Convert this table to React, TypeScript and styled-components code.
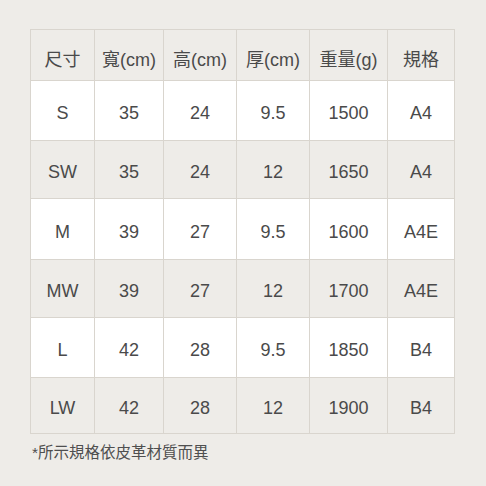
import React from "react";
import styled, { createGlobalStyle } from "styled-components";

const Global = createGlobalStyle`
  html, body { margin: 0; padding: 0; background: #eeece8; }
  body { font-family: "Liberation Sans", "Noto Sans CJK TC", sans-serif; }
`;

const Page = styled.div`
  width: 486px;
  height: 486px;
  box-sizing: border-box;
  padding: 29px 0 0 30px;
  background: #eeece8;
  display: flex;
  flex-direction: column;
`;

const Table = styled.div`
  display: grid;
  grid-template-columns: 63px 68px 72px 72px 77px 66px;
  grid-template-rows: 50px 59px 57px 60px 57px 59px 55px;
  gap: 1px;
  padding: 1px;
  width: max-content;
  background: #d9d5ce;
`;

const Cell = styled.div<{ $tone: "head" | "white" | "gray" }>`
  display: flex;
  align-items: center;
  justify-content: center;
  padding-top: 6px;
  box-sizing: border-box;
  background: ${(p) => (p.$tone === "white" ? "#ffffff" : "#eeece8")};
  color: #4a4a4a;
  font-size: 18px;
  white-space: nowrap;
`;

const Note = styled.div`
  margin-top: 6px;
  margin-left: 2px;
  font-size: 15.5px;
  color: #4f4f4f;
  font-family: "Liberation Sans", "Noto Sans CJK TC", sans-serif;
`;

const head = ["尺寸", "寬(cm)", "高(cm)", "厚(cm)", "重量(g)", "規格"];
const rows = [
  ["S", "35", "24", "9.5", "1500", "A4"],
  ["SW", "35", "24", "12", "1650", "A4"],
  ["M", "39", "27", "9.5", "1600", "A4E"],
  ["MW", "39", "27", "12", "1700", "A4E"],
  ["L", "42", "28", "9.5", "1850", "B4"],
  ["LW", "42", "28", "12", "1900", "B4"],
];

export default function App() {
  return (
    <>
      <Global />
      <Page>
        <Table>
          {head.map((h) => (
            <Cell key={h} $tone="head">{h}</Cell>
          ))}
          {rows.map((r, i) =>
            r.map((v, j) => (
              <Cell key={`${i}-${j}`} $tone={i % 2 === 0 ? "white" : "gray"}>
                {v}
              </Cell>
            ))
          )}
        </Table>
        <Note>*所示規格依皮革材質而異</Note>
      </Page>
    </>
  );
}
